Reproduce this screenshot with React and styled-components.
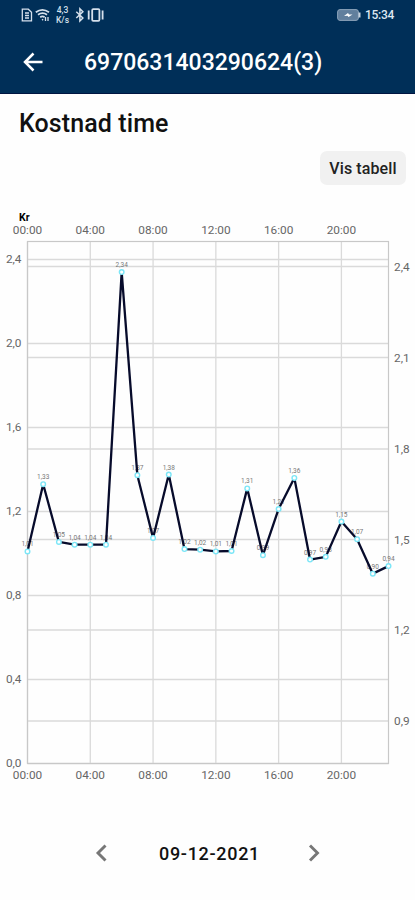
import styled, { createGlobalStyle } from "styled-components";

const hourly = [
  1.01, 1.33, 1.055, 1.042, 1.042, 1.042, 2.34, 1.373, 1.074, 1.376, 1.021, 1.018,
  1.01, 1.012, 1.31, 0.992, 1.212, 1.36, 0.971, 0.984, 1.152, 1.068, 0.904, 0.94,
];
const leftTicks = [0, 0.4, 0.8, 1.2, 1.6, 2.0, 2.4];
const rightTicks = [
  { label: "2,4", y: 266.5 },
  { label: "2,1", y: 357.5 },
  { label: "1,8", y: 449 },
  { label: "1,5", y: 539.5 },
  { label: "1,2", y: 630 },
  { label: "0,9", y: 721 },
];
const hours = [0, 4, 8, 12, 16, 20];

const plot = { left: 27.5, right: 388.5, top: 241.5, bottom: 763.5 };
const xAt = (hour) => plot.left + (hour * (plot.right - plot.left)) / 23;
const yAt = (value) => plot.bottom - value * 210;
const format = (value, digits) => value.toFixed(digits).replace(".", ",");

function StatusIcons() {
  return (
    <svg width="92" height="24" viewBox="20 4 92 24" fill="none" stroke="#d5e0eb" strokeWidth="1.3">
      {/* sim card */}
      <path d="M22.3 9.2h6l3.2 3v8.6h-9.2zM25 13h4M25 15.5h4M25 18h4" />
      {/* wifi */}
      <path d="M35.800 12.2q6.600-4.800 13.200 0M38 14.800q4.600-3.200 9 0M40.200 17.200q2.200-1.500 4.400 0" strokeWidth="1.8" />
      <path d="M42 19.300l1.200.800M45.500 17v4M48 21v-4" />
      <Speed x="62.5" y="13.2">4,3</Speed>
      <Speed x="62.5" y="23.2">K/s</Speed>
      {/* bluetooth */}
      <path d="M76.300 11.700l6.600 6.300-3 3V8.700l3 3-6.600 6.300" strokeWidth="1.500" />
      {/* vibrate */}
      <rect x="92.2" y="9.2" width="7.2" height="11.6" rx="1" strokeWidth="1.8" />
      <path d="M88.700 10.500v9M102.600 10.500v9" strokeWidth="1.800" />
    </svg>
  );
}

function CostChart() {
  const points = hourly.map((value, hour) => `${xAt(hour)},${yAt(value)}`).join(" ");
  return (
    <Chart viewBox="0 205 415 585">
      <Unit x="19" y="220.5">Kr</Unit>
      <Grid>
        {leftTicks.map((tick) => (
          <line key={tick} x1={plot.left} x2={plot.right} y1={yAt(tick)} y2={yAt(tick)} />
        ))}
        {rightTicks.map(({ label, y }) => (
          <line key={label} x1={plot.left} x2={plot.right} y1={y} y2={y} />
        ))}
        {hours.map((hour) => (
          <line key={hour} x1={xAt(hour)} x2={xAt(hour)} y1={plot.top} y2={plot.bottom} />
        ))}
      </Grid>
      <Frame x={plot.left} y={plot.top} width={plot.right - plot.left} height={plot.bottom - plot.top} />

      {hours.map((hour) => {
        const label = `${String(hour).padStart(2, "0")}:00`;
        return (
          <g key={hour}>
            <AxisLabel x={xAt(hour)} y="234" $anchor="middle">{label}</AxisLabel>
            <AxisLabel x={xAt(hour)} y="779" $anchor="middle">{label}</AxisLabel>
          </g>
        );
      })}
      {leftTicks.map((tick) => (
        <AxisLabel key={tick} x="21.5" y={yAt(tick) + 3.5} $anchor="end">{format(tick, 1)}</AxisLabel>
      ))}
      {rightTicks.map(({ label, y }) => (
        <AxisLabel key={label} x="394" y={y + 4.2}>{label}</AxisLabel>
      ))}

      {/* values sit underneath the line */}
      {hourly.map((value, hour) => (
        <ValueLabel key={hour} x={xAt(hour)} y={yAt(value) - 5}>{format(value, 2)}</ValueLabel>
      ))}
      <Line points={points} />
      {hourly.map((value, hour) => (
        <Marker key={hour} cx={xAt(hour)} cy={yAt(value)} r="2.3" />
      ))}
    </Chart>
  );
}

function App() {
  return (
    <Screen>
      <GlobalStyle />
      <Header>
        <StatusBar>
          <StatusIcons />
          <StatusRight>
            <svg width="24" height="12" viewBox="0 0 24 12">
              <rect x="0.6" y="0.6" width="20.8" height="10.8" rx="2.4" fill="#617f9d" stroke="#8ca3b9" />
              <path d="M22.5 3.5v5" stroke="#c5d2df" strokeWidth="2" />
              <path d="M7 7l4-3 1 1.5h3.5L11.5 8l-1-1.3z" fill="#fff" />
            </svg>
            <Clock>15:34</Clock>
          </StatusRight>
        </StatusBar>
        <TitleBar>
          <BackButton aria-label="Tilbake">
            <svg width="20" height="20" viewBox="0 0 20 20" fill="none" stroke="#fff" strokeWidth="2.5">
              <path d="M19.500 10H2M10.500 1.500L2 10l8.500 8.500" />
            </svg>
          </BackButton>
          <Title>6970631403290624(3)</Title>
        </TitleBar>
      </Header>
      <Heading>Kostnad time</Heading>
      <Actions>
        <TableButton>Vis tabell</TableButton>
      </Actions>
      <CostChart />
      <DateNav>
        <ArrowButton aria-label="Forrige">
          <svg width="12" height="18" viewBox="0 0 12 18" fill="none" stroke="#777" strokeWidth="2.9">
            <path d="M10.500 1.500L3 9l7.500 7.500" />
          </svg>
        </ArrowButton>
        <DateText>09-12-2021</DateText>
        <ArrowButton aria-label="Neste">
          <svg width="12" height="18" viewBox="0 0 12 18" fill="none" stroke="#777" strokeWidth="2.9">
            <path d="M2 1.500L9.500 9L2 16.500" />
          </svg>
        </ArrowButton>
      </DateNav>
    </Screen>
  );
}

const GlobalStyle = createGlobalStyle`
  * {
    box-sizing: border-box;
  }
  body {
    margin: 0;
    background: #fefefe;
    font-family: Roboto, "Liberation Sans", sans-serif;
  }
  button {
    border: 0;
    padding: 0;
    background: none;
    font-family: inherit;
  }
`;

const Screen = styled.main`
  display: flex;
  flex-direction: column;
  width: 415px;
  height: 900px;
  overflow: hidden;
`;

const Header = styled.header`
  height: 94px;
  background: #002f58;
  border-bottom: 1px solid #001541;
`;

const StatusBar = styled.div`
  display: flex;
  justify-content: space-between;
  height: 32px;
  padding: 4px 21px 0 20px;
`;

const StatusRight = styled.div`
  display: flex;
  align-items: center;
  gap: 4px;
  height: 22px;
`;

const Clock = styled.span`
  color: #dfe8f1;
  font-size: 12px;
  font-weight: 500;
  letter-spacing: -0.3px;
`;

const Speed = styled.text`
  fill: #d5e0eb;
  stroke: none;
  font-size: 8.5px;
  font-weight: 500;
  text-anchor: middle;
`;

const TitleBar = styled.div`
  display: flex;
  align-items: center;
  height: 60px;
  padding-left: 23px;
`;

const BackButton = styled.button`
  display: flex;
  width: 61px;
`;

const Title = styled.h1`
  margin: 0;
  color: #fff;
  font-size: 23px;
  font-weight: 500;
  white-space: nowrap;
`;

const Heading = styled.h2`
  height: 56px;
  margin: 0;
  padding: 15px 19px 0;
  color: #111;
  font-size: 25px;
  font-weight: 500;
  letter-spacing: 0.1px;
  line-height: 30px;
`;

const Actions = styled.div`
  display: flex;
  justify-content: flex-end;
  height: 55px;
  padding: 1px 9px 0;
`;

const TableButton = styled.button`
  width: 86px;
  height: 34px;
  border-radius: 7px;
  background: #f1f1f1;
  color: #222;
  font-size: 16px;
  font-weight: 500;
  letter-spacing: 0.1px;
`;

const Chart = styled.svg`
  display: block;
  width: 415px;
  height: 585px;
`;

const Grid = styled.g`
  stroke: #dadada;
  stroke-width: 1.3px;
`;

const Frame = styled.rect`
  fill: none;
  stroke: #c8c8c8;
  stroke-width: 1.2px;
`;

const Unit = styled.text`
  fill: #000;
  font-size: 10.5px;
  font-weight: 700;
`;

const AxisLabel = styled.text`
  fill: #666;
  font-size: 11.8px;
  text-anchor: ${({ $anchor }) => $anchor || "start"};
`;

const ValueLabel = styled.text`
  fill: #777;
  font-size: 6.5px;
  text-anchor: middle;
`;

const Line = styled.polyline`
  fill: none;
  stroke: #070b2b;
  stroke-width: 2.3px;
  stroke-linejoin: bevel;
`;

const Marker = styled.circle`
  fill: #fff;
  stroke: #7ce6f7;
  stroke-width: 1.4px;
`;

const DateNav = styled.nav`
  display: flex;
  align-items: center;
  justify-content: space-between;
  width: 225px;
  height: 30px;
  margin: 48px 0 0 95px;
`;

const ArrowButton = styled.button`
  display: flex;
`;

const DateText = styled.time`
  padding-left: 4px;
  color: #111;
  font-size: 18px;
  font-weight: 500;
  letter-spacing: 0.7px;
`;

export default App;
